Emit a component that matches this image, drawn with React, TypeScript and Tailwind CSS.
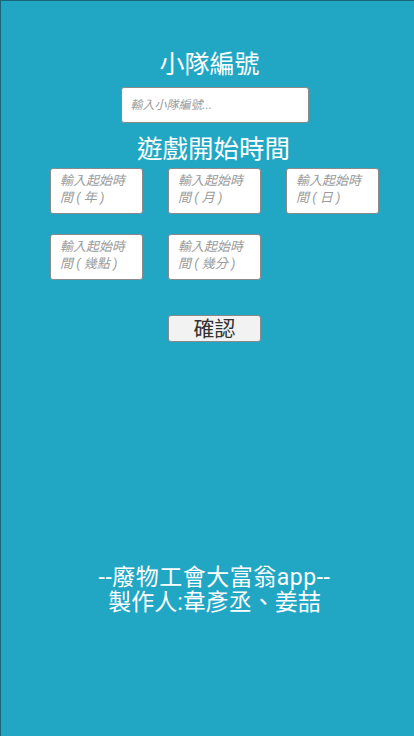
import { useState } from "react";

const FONT = "font-['Roboto','Noto_Sans_CJK_TC',sans-serif]";

const TIME_FIELDS = [
  { key: "year", label: "輸入起始時間 ( 年 )" },
  { key: "month", label: "輸入起始時間 ( 月 )" },
  { key: "day", label: "輸入起始時間 ( 日 )" },
  { key: "hour", label: "輸入起始時間 ( 幾點 )" },
  { key: "minute", label: "輸入起始時間 ( 幾分 )" },
];

export default function App() {
  const [team, setTeam] = useState("");
  const [times, setTimes] = useState<Record<string, string>>({});

  return (
    <div
      className={`${FONT} w-[414px] h-[736px] bg-[#21a7c4] border-l border-t border-[#1b6676] flex flex-col overflow-hidden`}
    >
      <div className="pt-[49px] flex flex-col items-center">
        <h1 className="ml-[4px] text-[25px] leading-[30px] text-white">小隊編號</h1>
        <input
          value={team}
          onChange={(e) => setTeam(e.target.value)}
          placeholder="輸入小隊編號..."
          className="mt-[7px] ml-[14px] w-[188px] h-[36px] px-[9px] bg-white border border-[#8a8a8a] rounded-[3px] text-[12px] outline-none placeholder:italic placeholder:text-[#9b9b9b]"
        />
        <h2 className="mt-[11px] ml-[12px] text-[25.5px] leading-[30px] text-white">遊戲開始時間</h2>
      </div>

      <div className="mt-[4px] pl-[49px] grid grid-cols-[93px_93px_93px] gap-x-[25px] gap-y-[20px]">
        {TIME_FIELDS.map((f) => (
          <textarea
            key={f.key}
            value={times[f.key] ?? ""}
            onChange={(e) => setTimes((t) => ({ ...t, [f.key]: e.target.value }))}
            placeholder={f.label}
            className="h-[46px] w-[93px] resize-none overflow-hidden pl-[9px] pr-[6px] pt-[3px] bg-white border border-[#8a8a8a] rounded-[3px] text-[13px] leading-[17px] outline-none placeholder:italic placeholder:text-[#9b9b9b]"
          />
        ))}
      </div>

      <div className="mt-[35px] flex justify-center pl-[14px]">
        <button className="w-[93px] h-[27px] bg-[#f2f2f2] border border-[#8a8a8a] rounded-[3px] text-[21px] leading-[24px] text-[#333]">
          確認
        </button>
      </div>

      <div className="mt-[223px] flex flex-col items-center text-white text-[23px] leading-[25px] pl-[14px]">
        <div className="tracking-[0.5px]">--廢物工會大富翁app--</div>
        <div>製作人:韋彥丞、姜喆</div>
      </div>
    </div>
  );
}
